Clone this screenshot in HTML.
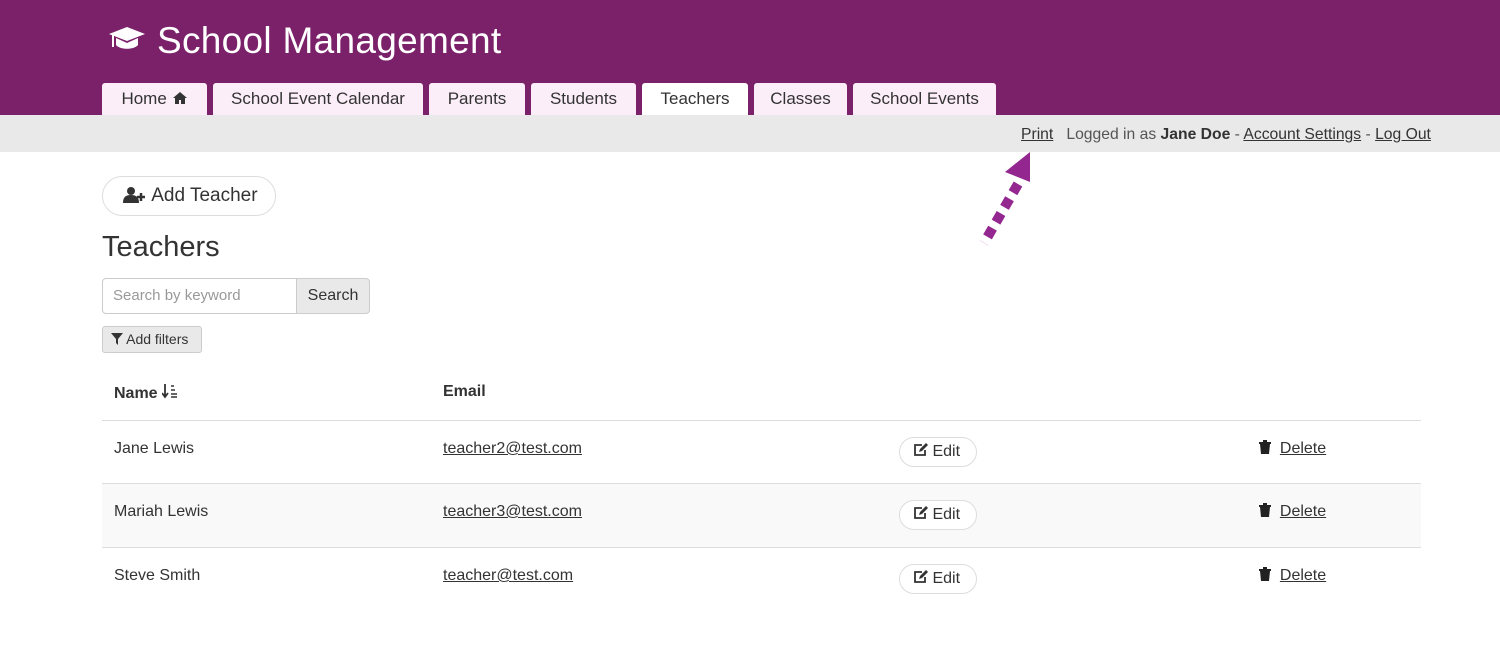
<!DOCTYPE html>
<html><head><meta charset="utf-8"><style>
*{margin:0;padding:0;box-sizing:border-box}
body{width:1500px;height:657px;background:#fff;font-family:"Liberation Sans",sans-serif;color:#333;position:relative;overflow:hidden}
.a{position:absolute}
.hdr{left:0;top:0;width:1500px;height:115px;background:#7b216a}
.title{left:157px;top:20px;font-size:37px;color:#fff;letter-spacing:0.3px}
.tab{top:83px;height:32px;background:#fbeef8;border-radius:3px 3px 0 0;font-size:17px;color:#333;text-align:center;line-height:32px}
.bar{left:0;top:115px;width:1500px;height:37px;background:#e9e9e9}
.btn{border:1px solid #ddd;border-radius:16px;background:#fff}
u{text-decoration:underline}
.cell{font-size:16px;color:#333}
.line{left:102px;width:1319px;height:1px;background:#ddd}
</style></head><body>
<div class="a hdr"></div>
<svg class="a" style="left:108px;top:26px" width="38" height="26" viewBox="0 0 38 26"><path d="M19 1L37 8L19 15L1 8Z" fill="#fff"/><path d="M8 12V19C12 24 26 24 30 19V12L19 17Z" fill="#fff"/><rect x="4" y="9" width="2" height="12" fill="#fff"/></svg>
<div class="a title">School Management</div>
<div class="a tab" style="left:102px;width:105px">Home <svg width="16" height="14" viewBox="0 0 16 14" style="vertical-align:-1px"><path d="M8 1L1 7H3V13H7V9H9V13H13V7H15Z" fill="#333"/></svg></div>
<div class="a tab" style="left:213px;width:210px">School Event Calendar</div>
<div class="a tab" style="left:429px;width:96px">Parents</div>
<div class="a tab" style="left:531px;width:105px">Students</div>
<div class="a tab" style="left:642px;width:106px;background:#fff">Teachers</div>
<div class="a tab" style="left:754px;width:93px">Classes</div>
<div class="a tab" style="left:853px;width:143px">School Events</div>
<div class="a bar"></div>
<div class="a" style="left:1021px;top:126px;font-size:15.7px;color:#555;white-space:nowrap"><u style="color:#333">Print</u>&nbsp;&nbsp; Logged in as <b style="color:#333">Jane Doe</b> - <u style="color:#333">Account Settings</u> - <u style="color:#333">Log Out</u></div>
<svg class="a" style="left:0;top:0" width="1500" height="657"><polygon points="1030,152 1005,172 1030,182" fill="#93278f"/><path d="M1018,184L984,243" stroke="#93278f" stroke-width="10" stroke-dasharray="10 7"/></svg>
<div class="a btn" style="left:102px;top:176px;width:174px;height:40px;border-radius:20px;font-size:19px;line-height:38px;padding-left:20px"><svg width="24" height="16" viewBox="0 0 24 16" style="vertical-align:-2px"><circle cx="8" cy="4" r="4" fill="#333"/><path d="M0 16C0 10 3 8 8 8C13 8 16 10 16 16Z" fill="#333"/><path d="M18 6V14M14 10H22" stroke="#333" stroke-width="2.5"/></svg> Add Teacher</div>
<div class="a" style="left:102px;top:231px;font-size:29px;color:#333">Teachers</div>
<div class="a" style="left:102px;top:278px;width:195px;height:36px;border:1px solid #ccc;border-radius:4px 0 0 4px;font-size:15px;color:#999;line-height:34px;padding-left:10px">Search by keyword</div>
<div class="a" style="left:296px;top:278px;width:74px;height:36px;border:1px solid #ccc;border-radius:0 4px 4px 0;background:#e9e9e9;font-size:16px;line-height:34px;text-align:center">Search</div>
<div class="a" style="left:102px;top:326px;width:100px;height:27px;border:1px solid #ccc;border-radius:3px;background:#e9e9e9;font-size:14px;line-height:25px;padding-left:8px"><svg width="12" height="12" viewBox="0 0 12 12" style="vertical-align:-1px"><path d="M0 0H12L7 6V12L5 10V6Z" fill="#333"/></svg> Add filters</div>
<div class="a cell" style="left:114px;top:383px;font-weight:bold">Name <svg width="16" height="16" viewBox="0 0 16 16" style="vertical-align:-1px"><path d="M3 1V13M0 10L3 14L6 10" stroke="#333" stroke-width="1.8" fill="none"/><path d="M9 3H12M9 7H13M9 11H15M9 14H15" stroke="#333" stroke-width="1.6"/></svg></div>
<div class="a cell" style="left:443px;top:383px;font-weight:bold">Email</div>
<div class="a line" style="top:420px"></div>
<div class="a" style="left:102px;top:484px;width:1319px;height:63px;background:#f9f9f9"></div>
<div class="a line" style="top:483px"></div>
<div class="a line" style="top:547px"></div>

<div class="a cell" style="left:114px;top:440px">Jane Lewis</div>
<div class="a cell" style="left:443px;top:440px"><u>teacher2@test.com</u></div>
<div class="a cell" style="left:114px;top:503px">Mariah Lewis</div>
<div class="a cell" style="left:443px;top:503px"><u>teacher3@test.com</u></div>
<div class="a cell" style="left:114px;top:567px">Steve Smith</div>
<div class="a cell" style="left:443px;top:567px"><u>teacher@test.com</u></div>

<div class="a btn" style="left:899px;top:437px;width:78px;height:30px;font-size:16px;line-height:28px;padding-left:13px"><svg width="15" height="14" viewBox="0 0 15 14" style="vertical-align:-1px"><path d="M9 2H2V12H12V7" stroke="#333" stroke-width="1.8" fill="none"/><path d="M6 9L7 6L13 0L15 2L9 8Z" fill="#333"/></svg> Edit</div>
<div class="a btn" style="left:899px;top:500px;width:78px;height:30px;font-size:16px;line-height:28px;padding-left:13px"><svg width="15" height="14" viewBox="0 0 15 14" style="vertical-align:-1px"><path d="M9 2H2V12H12V7" stroke="#333" stroke-width="1.8" fill="none"/><path d="M6 9L7 6L13 0L15 2L9 8Z" fill="#333"/></svg> Edit</div>
<div class="a btn" style="left:899px;top:564px;width:78px;height:30px;font-size:16px;line-height:28px;padding-left:13px"><svg width="15" height="14" viewBox="0 0 15 14" style="vertical-align:-1px"><path d="M9 2H2V12H12V7" stroke="#333" stroke-width="1.8" fill="none"/><path d="M6 9L7 6L13 0L15 2L9 8Z" fill="#333"/></svg> Edit</div>

<div class="a cell" style="left:1259px;top:440px"><svg width="12" height="14" viewBox="0 0 12 14" style="vertical-align:-1px"><path d="M0 2H12V4H0ZM4 0H8V2H4ZM1 4H11L10 14H2Z" fill="#222"/></svg>&nbsp; <u>Delete</u></div>
<div class="a cell" style="left:1259px;top:503px"><svg width="12" height="14" viewBox="0 0 12 14" style="vertical-align:-1px"><path d="M0 2H12V4H0ZM4 0H8V2H4ZM1 4H11L10 14H2Z" fill="#222"/></svg>&nbsp; <u>Delete</u></div>
<div class="a cell" style="left:1259px;top:567px"><svg width="12" height="14" viewBox="0 0 12 14" style="vertical-align:-1px"><path d="M0 2H12V4H0ZM4 0H8V2H4ZM1 4H11L10 14H2Z" fill="#222"/></svg>&nbsp; <u>Delete</u></div>
</body></html>
